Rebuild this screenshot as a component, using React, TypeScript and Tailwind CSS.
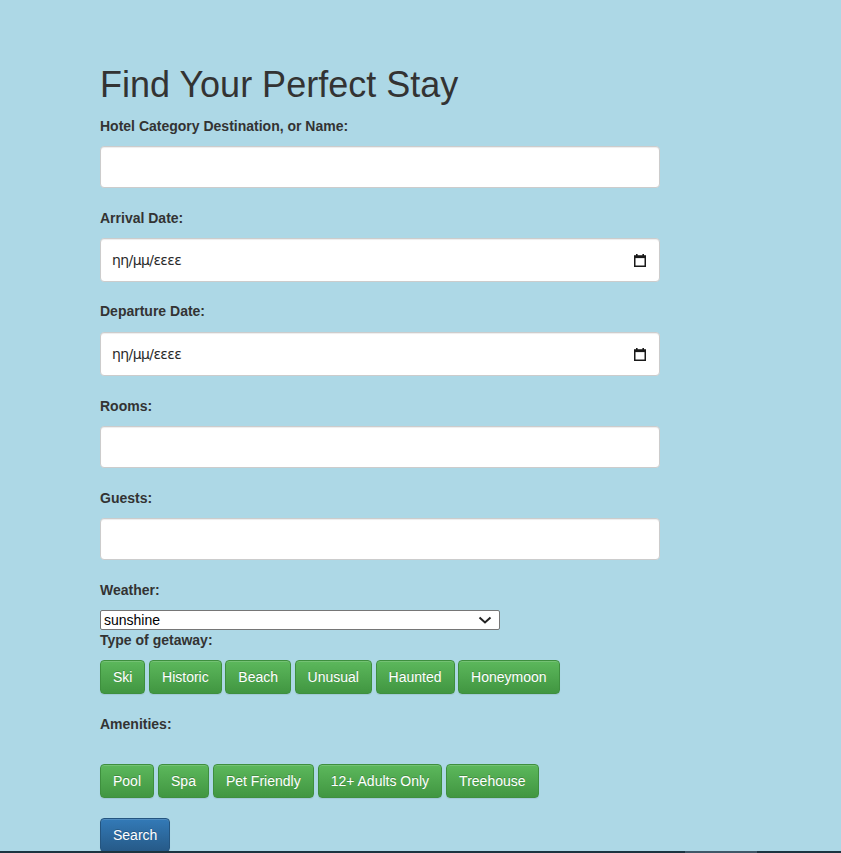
import React from "react";

const greenBtn =
  "h-[34px] px-[12px] rounded-[4px] border border-[#3e8f3e] bg-gradient-to-b from-[#5cb85c] to-[#419641] text-white text-[14px] leading-[20px] [text-shadow:0_-1px_0_rgba(0,0,0,0.2)] shadow-[inset_0_1px_0_rgba(255,255,255,0.15),0_1px_1px_rgba(0,0,0,0.075)]";

function Label({ children, className = "" }: { children: React.ReactNode; className?: string }) {
  return (
    <label className={`block text-[14px] leading-[20px] font-bold text-[#333] ${className}`}>{children}</label>
  );
}

function TextInput() {
  return (
    <input
      type="text"
      className="block w-[560px] h-[42px] rounded-[4px] border border-[#ccc] bg-white px-[12px] text-[14px] shadow-[inset_0_1px_1px_rgba(0,0,0,0.075)] outline-none"
    />
  );
}

function CalendarIcon() {
  return (
    <svg width="12" height="13" viewBox="0 0 12 13" className="block">
      <rect x="2" y="0" width="1.6" height="2.5" fill="#1a1a1a" />
      <rect x="8.4" y="0" width="1.6" height="2.5" fill="#1a1a1a" />
      <rect x="0" y="1.5" width="12" height="2.6" fill="#1a1a1a" />
      <rect x="0.75" y="2.2" width="10.5" height="10.05" fill="none" stroke="#1a1a1a" strokeWidth="1.5" />
    </svg>
  );
}

function DateInput() {
  return (
    <div className="flex w-[560px] h-[44px] items-center justify-between rounded-[4px] border border-[#ccc] bg-white pl-[11px] pr-[13px] shadow-[inset_0_1px_1px_rgba(0,0,0,0.075)]">
      <span className="text-[14px] text-[#2a2a2a] [font-family:'DejaVu_Sans','Liberation_Sans',sans-serif] tracking-[-0.6px]">
        ηη/μμ/εεεε
      </span>
      <CalendarIcon />
    </div>
  );
}

export default function App() {
  const getaways = ["Ski", "Historic", "Beach", "Unusual", "Haunted", "Honeymoon"];
  const amenities = ["Pool", "Spa", "Pet Friendly", "12+ Adults Only", "Treehouse"];
  return (
    <div className="min-h-[853px] bg-[#add8e6] text-[#333] [font-family:'Liberation_Sans',Arial,sans-serif]">
      <div className="ml-[100px] w-[560px] pt-[65px]">
        <h1 className="text-[36px] leading-[40px] font-normal text-[#333]">Find Your Perfect Stay</h1>

        <Label className="mt-[11px] mb-[10px]">Hotel Category Destination, or Name:</Label>
        <TextInput />

        <Label className="mt-[20px] mb-[10px]">Arrival Date:</Label>
        <DateInput />

        <Label className="mt-[19px] mb-[11px]">Departure Date:</Label>
        <DateInput />

        <Label className="mt-[20px] mb-[10px]">Rooms:</Label>
        <TextInput />

        <Label className="mt-[20px] mb-[10px]">Guests:</Label>
        <TextInput />

        <Label className="mt-[20px] mb-[10px]">Weather:</Label>
        <div className="flex w-[400px] h-[20px] items-center justify-between rounded-[2px] border border-[#767676] bg-white pl-[3px] pr-[7px]">
          <span className="text-[14px] leading-[18px] text-black">sunshine</span>
          <svg width="14" height="8" viewBox="0 0 14 8" className="block">
            <path d="M1.5 1.5 L7 6.5 L12.5 1.5" fill="none" stroke="#222" strokeWidth="2" />
          </svg>
        </div>

        <Label>Type of getaway:</Label>
        <div className="mt-[10px] flex gap-[3.6px]">
          {getaways.map((g) => (
            <button key={g} className={greenBtn}>
              {g}
            </button>
          ))}
        </div>

        <Label className="mt-[20px]">Amenities:</Label>
        <div className="mt-[30px] flex gap-[4px]">
          {amenities.map((a) => (
            <button key={a} className={greenBtn}>
              {a}
            </button>
          ))}
        </div>

        <button className="mt-[20px] h-[34px] px-[12px] rounded-[4px] border border-[#245580] bg-gradient-to-b from-[#337ab7] to-[#265a88] text-white text-[14px] leading-[20px] [text-shadow:0_-1px_0_rgba(0,0,0,0.2)] shadow-[inset_0_1px_0_rgba(255,255,255,0.15),0_1px_1px_rgba(0,0,0,0.075)]">
          Search
        </button>
      </div>

      <div className="fixed bottom-0 left-0 right-0 h-[2px] flex bg-[#1c3440]">
        <div className="w-[685px]" />
        <div className="w-[72px] bg-[#405868]" />
      </div>
    </div>
  );
}
